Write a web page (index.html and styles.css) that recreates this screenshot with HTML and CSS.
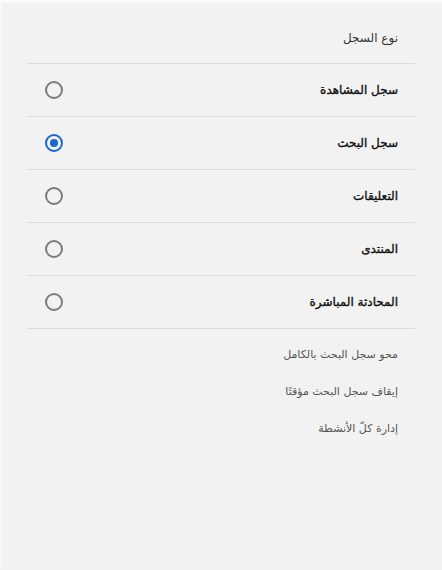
FILE: index.html
```html
<!DOCTYPE html>
<html lang="ar" dir="rtl">
<head>
<meta charset="utf-8">
<link rel="stylesheet" href="styles.css">
</head>
<body>
<div class="page">
  <div class="panel">
    <div class="heading">نوع السجل</div>
    <div class="list">
      <div class="row"><span class="label">سجل المشاهدة</span><span class="radio"></span></div>
      <div class="row"><span class="label">سجل البحث</span><span class="radio checked"></span></div>
      <div class="row"><span class="label">التعليقات</span><span class="radio"></span></div>
      <div class="row"><span class="label">المنتدى</span><span class="radio"></span></div>
      <div class="row"><span class="label">المحادثة المباشرة</span><span class="radio"></span></div>
    </div>
    <div class="links">
      <a class="link">محو سجل البحث بالكامل</a>
      <a class="link">إيقاف سجل البحث مؤقتًا</a>
      <a class="link">إدارة كلّ الأنشطة</a>
    </div>
  </div>
</div>
</body>
</html>
```

FILE: styles.css
```css
html, body {
  margin: 0;
  padding: 0;
  background: #f2f2f2;
}
body {
  font-family: "DejaVu Sans", "Noto Sans", sans-serif;
  direction: rtl;
  width: 442px;
  height: 570px;
  overflow: hidden;
}
.page {
  border-top: 3px solid #fafafa;
  border-left: 2px solid #f8f8f8;
  height: 567px;
  box-sizing: border-box;
}
.panel {
  margin: 0 27px 0 25px;
}
.heading {
  padding: 26px 17px 16px 0;
  line-height: 18px;
  font-size: 12px;
  color: #333;
  border-bottom: 1px solid #dcdcdc;
}
.row {
  display: flex;
  align-items: center;
  justify-content: space-between;
  height: 52px;
  border-bottom: 1px solid #dcdcdc;
  padding: 0 17px 0 18px;
}
.label {
  font-size: 12px;
  font-weight: normal;
  color: #111;
  -webkit-text-stroke: 0.35px #111;
}
.radio {
  width: 14px;
  height: 14px;
  border: 2px solid #7c7c7c;
  border-radius: 50%;
  box-sizing: content-box;
  position: relative;
}
.radio.checked {
  border-color: #1a66d2;
}
.radio.checked::after {
  content: "";
  position: absolute;
  left: 3px;
  top: 3px;
  width: 8px;
  height: 8px;
  border-radius: 50%;
  background: #1a66d2;
}
.links {
  display: flex;
  flex-direction: column;
  padding-top: 7px;
  padding-right: 17px;
}
.link {
  display: block;
  line-height: 37px;
  font-size: 11px;
  color: #555;
}
```
